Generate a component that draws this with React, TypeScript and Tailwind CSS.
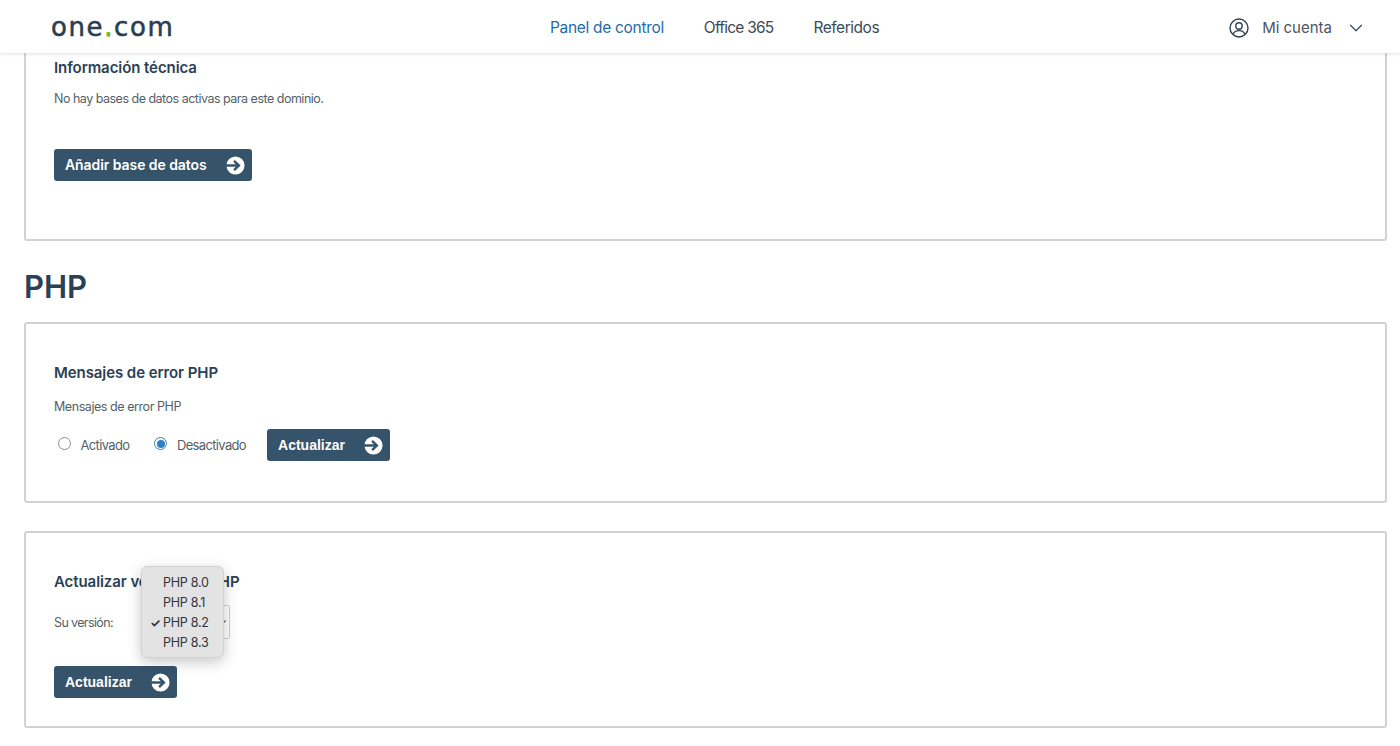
import React from 'react';
import { ChevronDown } from 'lucide-react';

const ArrowIcon = () => (
  <svg viewBox="0 0 20 20" className="h-[19px] w-[19px]">
    <circle cx="10" cy="10" r="9.5" fill="#fff" />
    <path d="M0 10h13" stroke="#35536b" strokeWidth="2.6" fill="none" />
    <path d="M8.500 5.200 13.500 10l-5 4.800" stroke="#35536b" strokeWidth="2.6" fill="none" />
  </svg>
);

const ActionButton = ({ label, width, arial }: { label: string; width: string; arial?: boolean }) => (
  <button className={`flex h-8 items-center justify-between rounded-[3px] bg-[#35536b] pl-[11px] pr-[7px] text-white ${width}`}>
    <span
      className={arial ? 'text-[14px] font-bold' : '-mt-[2px] text-[14px] font-semibold tracking-[-0.005em]'}
      style={arial ? { fontFamily: '"Liberation Sans", Arial, sans-serif' } : undefined}
    >
      {label}
    </span>
    <ArrowIcon />
  </button>
);

const Radio = ({ label, checked }: { label: string; checked?: boolean }) => (
  <label className="flex items-center gap-[9.5px] text-[13px] tracking-[-0.05em] text-[#555f68]">
    <span
      className={`mb-[3px] flex h-[13px] w-[13px] items-center justify-center rounded-full border ${
        checked ? 'border-[#3b82c4]' : 'border-[#8a9097]'
      }`}
    >
      {checked && <span className="h-[8px] w-[8px] rounded-full bg-[#2f7fc8]" />}
    </span>
    <span className="pt-[2px]">{label}</span>
  </label>
);

export default function App() {
  return (
    <div
      className="flex h-[746px] w-[1400px] flex-col overflow-hidden bg-white text-[#2a4155]"
      style={{ fontFamily: 'Inter, "Noto Sans", sans-serif' }}
    >
      <header className="relative z-10 flex h-[53px] shrink-0 items-center bg-white pl-[51px] pr-[33px] pt-[3px] shadow-[0_1px_4px_rgba(0,0,0,0.12)]">
        <div
          className="-mt-[3px] w-[499px] text-[26px] leading-none tracking-[1.6px] text-[#2a3d4d] [-webkit-text-stroke:0.5px_#2a3d4d]"
          style={{ fontFamily: '"DejaVu Sans", sans-serif' }}
        >
          one<span className="text-[#76b82a] [-webkit-text-stroke:1px_#76b82a]">.</span>com
        </div>
        <nav className="flex items-center text-[15.5px] tracking-[-0.02em] text-[#3c4a55]">
          <a className="text-[#1f6aa8]">Panel de control</a>
          <a className="ml-10 tracking-[-0.05em]">Office 365</a>
          <a className="ml-10 tracking-[-0.03em]">Referidos</a>
        </nav>
        <div className="ml-auto flex items-center text-[15px] text-[#4a5660]">
          <svg viewBox="0 0 20 20" className="mr-[13px] h-[20px] w-[20px]" fill="none" stroke="#33434f" strokeWidth="1.4">
            <circle cx="10" cy="10" r="9" />
            <circle cx="10" cy="8" r="3.2" />
            <path d="M4.200 16.200c.9-2.600 3-3.600 5.800-3.600s4.900 1 5.800 3.600" />
          </svg>
          <span>Mi cuenta</span>
          <ChevronDown className="ml-[13px] h-[22px] w-[22px] text-[#3c4a55]" strokeWidth={1.3} />
        </div>
      </header>

      <main className="pl-[24px] pr-[13px]">
        <section className="h-[188px] rounded-b-[3px] border-2 border-t-0 border-[#d2d2d2] pl-[28px] pt-[5px]">
          <h3 className="pt-[1px] text-[15px] font-semibold leading-[18px] tracking-[-0.005em]">Información técnica</h3>
          <p className="mt-[13px] text-[12.5px] leading-[18px] tracking-[-0.04em] text-[#555f68]">
            No hay bases de datos activas para este dominio.
          </p>
          <div className="mt-[41px]">
            <ActionButton label="Añadir base de datos" width="w-[198px]" />
          </div>
        </section>

        <h2 className="mt-[26px] text-[31px] font-semibold leading-10">PHP</h2>

        <section className="mt-[15px] h-[181px] rounded-[3px] border-2 border-[#d2d2d2] pl-[28px] pt-[40px]">
          <h3 className="text-[15px] font-semibold leading-[18px] tracking-[-0.005em]">Mensajes de error PHP</h3>
          <p className="mt-[16px] text-[12.5px] leading-[18px] tracking-[-0.035em] text-[#555f68]">Mensajes de error PHP</p>
          <div className="mt-[13px] flex items-center pl-[4px]">
            <Radio label="Activado" />
            <div className="ml-[25px]">
              <Radio label="Desactivado" checked />
            </div>
            <div className="ml-[21px]">
              <ActionButton label="Actualizar" width="w-[123px]" arial />
            </div>
          </div>
        </section>

        <section className="relative mt-[28px] h-[197px] rounded-[3px] border-2 border-[#d2d2d2] pl-[28px] pt-[40px]">
          <h3 className="text-[15px] font-semibold leading-[18px] tracking-[-0.005em]">Actualizar versión de PHP</h3>
          <div className="mt-[14px] flex h-[34px] items-center">
            <span className="w-[88px] pt-[2px] text-[12.5px] tracking-[-0.05em] text-[#555f68]">Su versión:</span>
            <div className="flex h-[34px] w-[88px] items-center justify-end rounded-[2px] border border-[#cfcfcf] pr-[1px]">
              <ChevronDown className="h-[10px] w-[10px] text-[#222]" strokeWidth={2.5} />
            </div>
          </div>
          <div className="mt-[27px]">
            <ActionButton label="Actualizar" width="w-[123px]" arial />
          </div>

          {/* native select popup, open over the field */}
          <ul className="absolute left-[115px] top-[33px] w-[83px] rounded-[6px] border border-[#d2d2d2] bg-[#e3e3e3] pb-[3.5px] pt-[5.5px] text-[12.5px] leading-[20.3px] tracking-[-0.02em] text-[#30343a] shadow-[0_4px_14px_rgba(0,0,0,0.22)]">
            <li className="pl-[21px]">PHP 8.0</li>
            <li className="pl-[21px]">PHP 8.1</li>
            <li className="relative pl-[21px]">
              <span className="absolute left-[8px] top-0 text-[12px] font-bold">✓</span>
              PHP 8.2
            </li>
            <li className="pl-[21px]">PHP 8.3</li>
          </ul>
        </section>
      </main>
    </div>
  );
}
